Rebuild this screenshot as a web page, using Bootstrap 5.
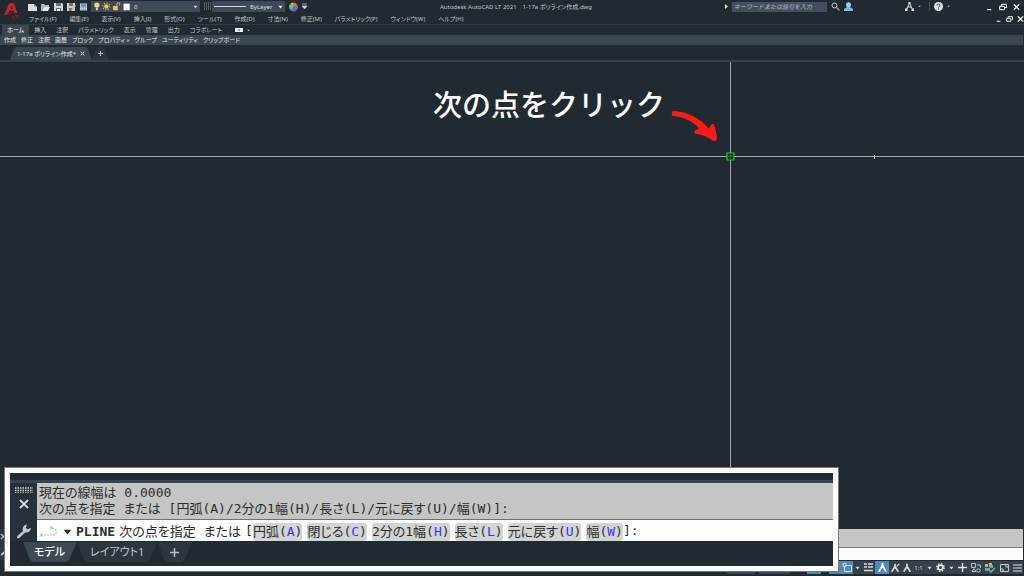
<!DOCTYPE html>
<html lang="ja">
<head>
<meta charset="utf-8">
<meta name="viewport" content="width=device-width, initial-scale=1">
<title>Autodesk AutoCAD LT 2021</title>
<link href="https://cdn.jsdelivr.net/npm/bootstrap@5.3.0/dist/css/bootstrap.min.css" rel="stylesheet">
<style>
  :root { --ink:#202a30; --bar:#3a4650; --field:#3e495a; --txt:#c3c8cb; }
  body { background:var(--ink); color:var(--txt); font:6px/10px "Noto Sans","Noto Sans CJK JP",sans-serif; font-feature-settings:"palt"; }
  svg { display:block; flex:none; }
  button, .plain { background:none; border:0; padding:0; color:inherit; font:inherit; text-decoration:none; white-space:nowrap; }
  .logo-box { width:24px; }
  .title-row { height:13px; }
  .menu-row { height:11px; gap:13px; padding-left:5px; }
  .ruled { border-bottom:1px solid #2f3c47; }
  .drop { background:var(--field); height:11px; }
  .drop select { appearance:none; background:none; border:0; padding:0; color:#dfe3e5; font:inherit; outline:0; }
  .layer-drop { width:109px; padding:0 2px 0 3px; }
  .line-drop { width:73px; padding:0 2px; }
  .find { width:95px; height:10px; background:#434f61; border:0; border-radius:0; padding:0 2px; font:italic 6px/10px "Noto Sans","Noto Sans CJK JP",sans-serif; color:#b9c0c8; }
  .find::placeholder { color:#b4bcc4; opacity:1; }
  .win { gap:6px; }
  .ribbon { height:10px; padding-left:2px; }
  .ribbon .plain { padding:0 5px; }
  .ribbon .plain.active { background:var(--bar); color:#fff; }
  .groups { height:10px; background:var(--bar); gap:5px; padding-left:4px; margin-right:1px; color:#e4e7e8; }
  .files { height:17px; border-bottom:2px solid #35414d; padding:2px 0 0 10px; }
  .slant { clip-path:polygon(0 100%,4px 2px,6px 0,calc(100% - 7px) 0,calc(100% - 4px) 2px,100% 100%); background:var(--bar); }
  .files .slant { height:13px; padding:0 7px; gap:4px; color:#e4e6e8; }
  .files .extra { background:#2b363f; padding:0 6px; }
  .sheet { min-height:200px; }
  .cross-v { left:730px; top:0; bottom:0; width:1px; background:#a4a8aa; }
  .cross-h { top:94px; left:0; right:0; height:1px; background:#a4a8aa; }
  .snap { left:726px; top:90px; }
  .tick { left:874px; top:93px; width:1px; height:4px; background:#d0d2d3; }
  .callout { left:433px; top:21px; font:500 29px/40px "Noto Sans CJK JP",sans-serif; font-feature-settings:normal; color:#fff; white-space:nowrap; }
  .swoop { left:670px; top:46px; }
  .mini-cmd { height:31px; background:#2e3843; margin-right:1px; }
  .mini-cmd .old { height:19px; background:#c4c6c5; border-bottom:1px solid #777c7e; }
  .mini-cmd .new { background:#fbfdfd; }
  .status { height:16px; padding:1px 1px 2px 0; background:#202a31; }
  .status button { height:13px; background:#36414c; display:flex; align-items:center; justify-content:center; color:#d5d9db; }
  .status .on { background:#5488b8; color:#fff; }
  .w8{width:8px}.w12{width:12px}.w14{width:14px}.w20{width:20px}.w24{width:24px}.w32{width:32px}
  .zoomed { left:5px; right:186px; bottom:5px; border:5px solid #fff; outline:1px solid #75797b; background:var(--ink); }
  .zoomed .edge { height:10px; border-bottom:3px solid #39424e; }
  .grip { width:27px; background:#27313a; padding:4px 0 2px; }
  .mono { font:13px/16px "DejaVu Sans Mono","Noto Sans CJK JP",monospace; font-feature-settings:"palt"; color:#2b2d2d; white-space:nowrap; }
  .history { background:#c4c6c5; border-bottom:1px solid #6d7173; padding:2px 2px; height:37px; }
  .entry { background:#fcfdfd; height:21px; padding:2px 0 0 3px; gap:4px; }
  .entry .chips { gap:5px; }
  .entry button { background:#d2d4d3; border-radius:3px; height:18px; }
  .entry b { font-weight:400; color:#3333ee; }
  .entry input { border:0; outline:0; background:none; min-width:0; }
  .layouts { height:25px; padding:1px 0 4px 13px; font-size:11px; line-height:20px; }
  .layouts .slant { padding:0 13px; clip-path:polygon(0 0,100% 0,calc(100% - 8px) 90%,calc(100% - 11px) 100%,10px 100%,7px 90%); background:#2b363f; }
  .layouts .active { background:#3d4953; color:#fff; font-weight:500; padding:0 12px 0 11px; }
</style>
<script src="https://cdn.jsdelivr.net/npm/bootstrap@5.3.0/dist/js/bootstrap.bundle.min.js"></script>
</head>
<body class="d-flex flex-column vh-100 overflow-hidden">
<svg class="d-none">
  <symbol id="down" viewBox="0 0 6 4"><path d="M.5.5h5L3 3.7z" fill="currentColor"/></symbol>
  <symbol id="cross" viewBox="0 0 8 8"><path d="M1 1l6 6M7 1L1 7" stroke="currentColor" stroke-width="1.5"/></symbol>
  <symbol id="mini" viewBox="0 0 8 8"><path d="M1 7h5" stroke="currentColor" stroke-width="1.3"/></symbol>
  <symbol id="restore" viewBox="0 0 8 8"><path d="M2.5 3V1.3h5v3.4H6M.7 3.3h4.8v3.4H.7z" fill="none" stroke="currentColor"/></symbol>
  <symbol id="man" viewBox="0 0 12 12"><path d="M6 1v3L2 10.500M6 4l4 6.500" fill="none" stroke="currentColor" stroke-width="2"/><path d="M6 2 3.500 8 6 6.500 8.500 8z" fill="currentColor"/></symbol>
  <symbol id="wrench" viewBox="0 0 16 16"><path d="M1.2 13.2 7 8C6 5 7.500 2.300 11 1.600L9.800 4.800l1.500 1.500L15 5c-.3 3.300-2.800 5-5.800 4.500L3 15.200c-1.300.6-2.500-.8-1.800-2z" fill="currentColor"/></symbol>
</svg>

<header class="d-flex ruled">
  <div class="logo-box d-flex justify-content-center">
    <svg width="18" height="21" viewBox="0 0 18 21" role="img" aria-label="AutoCAD"><path d="M1 15 6.500 3h4.300l3.700 10h-3.200l-.9-2.600H6.800L4.400 15z" fill="#c8262c"/><path d="m7.500 9 1.600-3.800L10.300 9z" fill="#202a30"/><path d="m2 15 6-3.500 2.500.4-6 3.100z" fill="#8d171d"/><path d="M9.500 15.500v2.300h1.800M12 15.900h4M14 16v2" stroke="#93242a" fill="none"/></svg>
  </div>
  <div class="flex-fill">
    <div class="title-row d-flex align-items-center">
      <div class="d-flex align-items-center gap-1 ps-1">
        <button aria-label="新規"><svg width="9" height="10" viewBox="0 0 9 10"><path d="M0 2h6l3 3v4H0z" fill="#dddfdf"/><path d="M6 2v3h3" fill="#9ba3a8"/></svg></button>
        <button aria-label="開く"><svg width="9" height="10" viewBox="0 0 9 10"><path d="M0 2h3l1 1h4v2H3L1 9H0z" fill="#aeb4b7"/><path d="M3 5h6L7 9H1z" fill="#e8e8e5"/></svg></button>
        <button aria-label="保存"><svg width="9" height="10" viewBox="0 0 9 10"><path d="M0 1h8l1 1v7H0z" fill="#d3d6d7"/><path d="M2 1h5v3H2zM2 6h5v3H2z" fill="#66717a"/><path d="M3 7h3v2H3z" fill="#eee"/></svg></button>
        <button aria-label="名前を付けて保存"><svg width="9" height="10" viewBox="0 0 9 10"><path d="M0 1h8v8H0z" fill="#cbd0d2"/><path d="M2 1h4v3H2zM2 6h3v3H2z" fill="#66717a"/><path d="m4 9 1-3 3-3 1 1-3 4z" fill="#e1b163"/></svg></button>
        <button aria-label="印刷"><svg width="7" height="10" viewBox="0 0 8 10"><path d="M0 1h8v8H0z" fill="#c8ced2"/><path d="M1 2h6v2.500H1z" fill="#3e8ac5"/><path d="M1.500 5.700h5M1.500 7.700h5" stroke="#64727d" stroke-dasharray="1 1"/></svg></button>
      </div>
      <div class="drop layer-drop d-flex align-items-center ms-1">
        <svg width="40" height="11" viewBox="0 0 42 11"><circle cx="3" cy="4" r="2.800" fill="#f4d57b"/><path d="M2 7h2v2.500H2z" fill="#d5d8d8"/><circle cx="13" cy="5.500" r="2.300" fill="#f1c15b"/><circle cx="13" cy="5.500" r="3.600" fill="none" stroke="#e7b54f" stroke-width="1.300" stroke-dasharray="1.200 1.600"/><path d="M20 5h5v4.500h-5z" fill="#edc160"/><path d="M24 5V3c0-2 3-2 3 0v1.500" fill="none" stroke="#e5c98c"/><path d="M31 2.500h6.500v7H31z" fill="#fff"/></svg>
        <select aria-label="画層" class="w20"><option>0</option></select>
        <svg class="ms-auto" width="5" height="4"><use href="#down"/></svg>
      </div>
      <button class="ps-1" aria-label="画層プロパティ"><svg width="8" height="9"><path d="M0 1h7M0 3h7M0 5h7M0 7h7" stroke="#87939c" stroke-dasharray="1 1"/></svg></button>
      <div class="drop line-drop d-flex align-items-center text-white">
        <svg width="32" height="3"><path d="M0 1.500h32" stroke="#d6dadc"/></svg>
        <select aria-label="線種" class="w24 ms-1"><option>ByLayer</option></select>
        <svg class="ms-auto" width="5" height="4"><use href="#down"/></svg>
      </div>
      <button class="ps-1" aria-label="色"><svg width="9" height="10" viewBox="0 0 10 10"><path d="M5 5V0a5 5 0 0 1 4.500 3z" fill="#f06a4d"/><path d="M5 5l4.500-2A5 5 0 0 1 8 9z" fill="#a158c4"/><path d="M5 5l3 4a5 5 0 0 1-5 .5z" fill="#5477db"/><path d="M5 5 3 9.500A5 5 0 0 1 0 5z" fill="#45b7c6"/><path d="M5 5H0a5 5 0 0 1 2-4z" fill="#7dc573"/><path d="M5 5 2 1a5 5 0 0 1 3-1z" fill="#f3bc49"/></svg></button>
      <button class="ps-1" aria-label="カスタマイズ"><svg width="5" height="7" viewBox="0 0 5 7"><path d="M0 1h5M0 3h5L2.500 6z" stroke="#d0d4d6" stroke-width=".7" fill="#d0d4d6"/></svg></button>
      <div class="flex-fill text-center text-nowrap">Autodesk AutoCAD LT 2021　1-17a ポリライン作成.dwg</div>
      <svg class="me-1" width="3" height="5"><path d="M0 0l3 2.500L0 5z" fill="#ddd"/></svg>
      <input class="find" type="search" placeholder="キーワードまたは語句を入力" aria-label="検索">
      <div class="d-flex align-items-center gap-1 ps-1 pe-5">
        <button aria-label="検索する"><svg width="9" height="9"><circle cx="3.500" cy="3.500" r="2.500" fill="none" stroke="#c2c8cb"/><path d="m5.500 5.500 3 3" stroke="#c59e79" stroke-width="1.300"/></svg></button>
        <button aria-label="サインイン"><svg width="9" height="9"><circle cx="4.500" cy="2.800" r="2.500" fill="#9dd0f2"/><path d="M0 9V7l3-2h3l3 2v2z" fill="#74b9e8"/></svg></button>
      </div>
      <div class="d-flex align-items-center gap-1 ps-1 pe-1">
        <button aria-label="アプリ"><svg width="9" height="9" viewBox="0 0 9 9"><path d="M4.500 1 1.500 7.500M4.500 1l3 6.500M3 5h3" stroke="#e2e4e4" fill="none"/><path d="M3.500 0h2v2h-2zM0 6.500h2.500V9H0zM6.500 6.500H9V9H6.500z" fill="#e2e4e4"/></svg></button>
        <svg width="3" height="3"><use href="#down"/></svg>
        <svg class="ms-1" width="1" height="9"><path d="M.5 0v9" stroke="#4a555e"/></svg>
        <button aria-label="ヘルプ"><svg width="9" height="9"><circle cx="4.500" cy="4.500" r="4.500" fill="#dfe1e1"/><path d="M3 3.500C3 1.500 6 1.700 6 3.500c0 1-1.500 1-1.500 2M4.500 6.500v1" fill="none" stroke="#27323a"/></svg></button>
        <svg width="3" height="3"><use href="#down"/></svg>
      </div>
      <div class="win d-flex ps-4 pe-1 text-white">
        <button class="ps-2" aria-label="最小化"><svg width="7" height="8"><use href="#mini"/></svg></button>
        <button aria-label="元のサイズ"><svg width="8" height="8"><use href="#restore"/></svg></button>
        <button aria-label="閉じる"><svg width="7" height="8"><use href="#cross"/></svg></button>
      </div>
    </div>
    <nav class="menu-row d-flex align-items-center" aria-label="メニュー">
      <a class="plain" href="#">ファイル(F)</a><a class="plain" href="#">編集(E)</a><a class="plain" href="#">表示(V)</a><a class="plain" href="#">挿入(I)</a><a class="plain" href="#">形式(O)</a><a class="plain" href="#">ツール(T)</a><a class="plain" href="#">作成(D)</a><a class="plain" href="#">寸法(N)</a><a class="plain" href="#">修正(M)</a><a class="plain" href="#">パラメトリック(P)</a><a class="plain" href="#">ウィンドウ(W)</a><a class="plain" href="#">ヘルプ(H)</a>
      <div class="d-flex ms-auto gap-1 text-white">
        <button aria-label="図面を最小化"><svg width="6" height="8"><use href="#mini"/></svg></button>
        <button aria-label="図面を元に戻す"><svg width="7" height="8"><use href="#restore"/></svg></button>
        <button aria-label="図面を閉じる"><svg width="7" height="8"><use href="#cross"/></svg></button>
      </div>
    </nav>
  </div>
</header>

<nav class="ribbon d-flex align-items-center" aria-label="リボン">
  <a class="plain active" href="#">ホーム</a><a class="plain" href="#">挿入</a><a class="plain" href="#">注釈</a><a class="plain" href="#">パラメトリック</a><a class="plain" href="#">表示</a><a class="plain" href="#">管理</a><a class="plain" href="#">出力</a><a class="plain" href="#">コラボレート</a>
  <button class="ms-2 d-flex align-items-center gap-1" aria-label="表示切替"><svg width="8" height="4"><path d="M0 0h8v4H0z" fill="#f2f3f3"/><path d="M3 2.500 4 1l1 1.500z" fill="#333"/></svg><svg width="3" height="3"><use href="#down"/></svg></button>
</nav>
<div class="groups d-flex align-items-center">
  <button>作成</button><button>修正</button><button>注釈</button><button>画層</button><button>ブロック</button><button>プロパティ »</button><button>グループ</button><button>ユーティリティ</button><button>クリップボード</button>
</div>
<div class="files d-flex align-items-end">
  <div class="slant d-flex align-items-center"><a class="plain" href="#">1-17a ポリライン作成*</a><button aria-label="タブを閉じる"><svg width="5" height="5"><use href="#cross"/></svg></button></div>
  <button class="slant extra" aria-label="新規タブ"><svg width="5" height="5"><path d="M2.500 0v5M0 2.500h5" stroke="#b6bcc0"/></svg></button>
</div>

<main class="sheet flex-fill position-relative overflow-hidden">
  <div class="cross-h position-absolute"></div>
  <div class="cross-v position-absolute"></div>
  <div class="tick position-absolute"></div>
  <svg class="snap position-absolute" width="9" height="9"><path d="M1 1h7v7H1z" fill="#202a30" stroke="#18cf20" stroke-width="1.200"/><path d="M2 4.500h5M4.500 2v5" stroke="#16761e"/></svg>
  <div class="callout position-absolute">次の点をクリック</div>
  <svg class="swoop position-absolute" width="50" height="36" viewBox="0 0 50 36"><path d="M3.500 3C1.800 3.300 1 7 2.600 8c11 .9 20 5 26.500 12.500-1.800 1-3.400 1.500-4.200 2-.5 1.200-.6 2.700.5 3.200 7 .8 12.500 3.500 17.500 7 2.200 1 4.200-.4 4-3-.4-4.500-1.500-9-3.200-13.400-1.200-.6-2.500-.2-3.200 1.500l-1.500 3C30 10 18 3.800 3.500 3z" fill="#fd1a1b"/></svg>
</main>

<section class="mini-cmd d-flex" aria-label="コマンド履歴">
  <div class="w12 d-flex flex-column justify-content-between py-1"><svg width="7" height="7"><use href="#cross"/></svg><svg width="11" height="11"><use href="#wrench"/></svg></div>
  <div class="flex-fill d-flex flex-column"><div class="old"></div><div class="new flex-fill"></div></div>
</section>
<footer class="status d-flex justify-content-end">
  <button class="w14" aria-label="グリッド"></button><button class="w14 me-1" aria-label="スナップ"></button><button class="w32 me-3" aria-label="直交"></button><button class="w14 on me-2" aria-label="極"></button><button class="w12 on" aria-label="トラッキング"></button>
  <button class="w12 on" aria-label="オブジェクトスナップ"><svg width="11" height="11"><path d="M3 3.500h6.500v6H2.500V4M1 1.500h3v3H1z" fill="none" stroke="#c9e0ef"/></svg></button>
  <button class="w8" aria-label="スナップ設定"><svg width="5" height="4"><use href="#down"/></svg></button>
  <button class="w14" aria-label="線の太さ"><svg width="9" height="9"><path d="M0 1h3M4 1h5M0 4h3M4 4h5M0 7.500h9" stroke="#d8dcde" stroke-width="1.400"/></svg></button>
  <button class="w14 on" aria-label="注釈表示"><svg width="11" height="11"><use href="#man"/></svg></button>
  <button class="w12" aria-label="自動スケール"><svg width="10" height="10" viewBox="0 0 12 12"><use href="#man"/><path d="m8 4 3-3" stroke="#ddd" stroke-width="1.500"/></svg></button>
  <button class="w12" aria-label="注釈"><svg width="10" height="10"><use href="#man"/></svg></button>
  <button class="w20">1:1<svg class="ms-1" width="5" height="4"><use href="#down"/></svg></button>
  <button class="w14" aria-label="ワークスペース"><svg width="9" height="9" viewBox="0 0 10 10"><circle cx="5" cy="5" r="2.700" fill="none" stroke="#e8eaea" stroke-width="2"/><circle cx="5" cy="5" r="4.200" fill="none" stroke="#e8eaea" stroke-width="1.400" stroke-dasharray="1.650 1.650"/></svg></button>
  <button class="w8" aria-label="切替"><svg width="5" height="4"><use href="#down"/></svg></button>
  <button class="w14" aria-label="注釈モニター"><svg width="9" height="9"><path d="M4.500 0v9M0 4.500h9" stroke="#e5e8e9" stroke-width="1.300"/></svg></button>
  <button class="w14" aria-label="選択表示"><svg width="10" height="10"><path d="M.5.500h4v4h-4zM1 8.500l2-3 2 3zM6 2h3.500v3" fill="none" stroke="#b9c0c5"/><circle cx="7.500" cy="7.500" r="1.700" fill="none" stroke="#b9c0c5"/></svg></button>
  <button class="w14" aria-label="パフォーマンス"><svg width="10" height="10"><path d="M0 1h3v3H0zM4 0h3v4H4z" fill="#e6b45f"/><path d="M0 5h5v3H0zM5 2h3v3H5z" fill="#5aa4dc"/><path d="m4 7 2 2 4-4" fill="none" stroke="#69c65b" stroke-width="1.500"/></svg></button>
  <button class="w14" aria-label="全画面"><svg width="9" height="8"><path d="M.5.500h8v7h-8z" fill="none" stroke="#c9ced1"/><path d="M5 2h2v2M4 6H2V4" fill="none" stroke="#c9ced1"/></svg></button>
  <button class="w12" aria-label="カスタマイズ"><svg width="9" height="8"><path d="M0 1h9M0 4h9M0 7h9" stroke="#dfe2e3" stroke-width="1.200"/></svg></button>
</footer>

<section class="zoomed position-absolute" aria-label="コマンドウィンドウ">
  <div class="edge"></div>
  <div class="d-flex">
    <div class="grip d-flex flex-column align-items-center justify-content-between">
      <svg width="18" height="6"><path d="M0 1h18M0 3.500h18M0 6h18" stroke="#d3d7d9" stroke-width="1.500" stroke-dasharray="1.500 1"/></svg>
      <button class="mb-2" aria-label="閉じる"><svg width="12" height="12" viewBox="0 0 12 12"><path d="m2 2 8 8m0-8-8 8" stroke="#d8dcdd" stroke-width="1.800"/></svg></button>
      <button aria-label="設定"><svg width="16" height="16"><use href="#wrench"/></svg></button>
    </div>
    <div class="flex-fill mono overflow-hidden">
      <div class="history"><div>現在の線幅は 0.0000</div><div>次の点を指定 または [円弧(A)/2分の1幅(H)/長さ(L)/元に戻す(U)/幅(W)]:</div></div>
      <div class="entry d-flex align-items-center">
        <svg width="19" height="13" viewBox="0 0 19 13"><path d="M1 10h12c5 0 4-7-1-7" fill="none" stroke="#a5c5da" stroke-width="1.200" stroke-dasharray="2 1"/><path d="M0 8.500h3v3H0zM10 1.500h3v3h-3z" fill="#b8cfde"/></svg>
        <svg width="9" height="6"><use href="#down"/></svg>
        <strong>PLINE</strong><span>次の点を指定</span><span class="ms-1">または</span>
        <span class="d-flex"><span>[</span><span class="chips d-flex"><button>円弧(<b>A</b>)</button><button>閉じる(<b>C</b>)</button><button>2分の1幅(<b>H</b>)</button><button>長さ(<b>L</b>)</button><button>元に戻す(<b>U</b>)</button><button>幅(<b>W</b>)</button></span><label for="cmd">]:</label></span>
        <input class="flex-fill" type="text" id="cmd" aria-label="コマンド入力">
      </div>
    </div>
  </div>
  <nav class="layouts d-flex" aria-label="レイアウト"><a class="plain slant active" href="#">モデル</a><a class="plain slant" href="#">レイアウト1</a><button class="slant d-flex align-items-center" aria-label="新規レイアウト"><svg width="9" height="9"><path d="M4.500 0v9M0 4.500h9" stroke="#b9bfc2" stroke-width="1.500"/></svg></button></nav>
</section>
</body>
</html>
